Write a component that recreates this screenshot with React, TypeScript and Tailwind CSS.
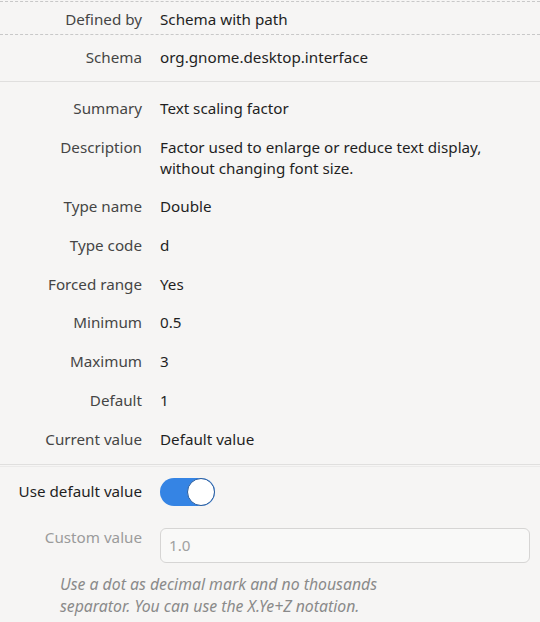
import React from "react";

const Row = ({ label, children, className = "" }: { label: string; children: React.ReactNode; className?: string }) => (
  <div className={`flex items-start ${className}`}>
    <div className="w-[142px] shrink-0 text-right text-[#454545]">{label}</div>
    <div className="ml-[18px] text-[#1f1f1f]">{children}</div>
  </div>
);

export default function App() {
  return (
    <div
      className="w-[540px] h-[622px] overflow-hidden bg-[#f6f5f4] text-[15.2px] leading-[21px]"
      style={{ fontFamily: '"Noto Sans", "Open Sans", sans-serif' }}
    >
      <div className="border-t border-dashed border-[#c8c8c8] mt-[1px]" />
      <Row label="Defined by" className="pt-[7px] pb-[4px]">Schema with path</Row>
      <div className="border-t border-dashed border-[#c8c8c8]" />
      <Row label="Schema" className="pt-[12px] pb-[13px]">org.gnome.desktop.interface</Row>
      <div className="border-t border-[#e0dfde]" />
      <div className="flex flex-col gap-[17.7px] pt-[16px] pb-[14px]">
        <Row label="Summary">Text scaling factor</Row>
        <Row label="Description">
          Factor used to enlarge or reduce text display,
          <br />
          without changing font size.
        </Row>
        <Row label="Type name">Double</Row>
        <Row label="Type code">d</Row>
        <Row label="Forced range">Yes</Row>
        <Row label="Minimum">0.5</Row>
        <Row label="Maximum">3</Row>
        <Row label="Default">1</Row>
        <Row label="Current value">Default value</Row>
      </div>
      <div className="border-t border-[#e0dfde]" />
      <div className="border-t border-[#ebeae9] mt-[1px]" />
      <div className="flex items-center mt-[11px]">
        <div className="w-[142px] shrink-0 text-right text-[#1f1f1f]">Use default value</div>
        <div className="ml-[18px] w-[55px] h-[28px] rounded-full bg-[#3584e4] relative">
          <div className="absolute right-[0px] top-[0px] w-[28px] h-[28px] rounded-full bg-white border border-[#2a5c9c]" />
        </div>
      </div>
      <div className="flex items-start mt-[22px]">
        <div className="w-[142px] shrink-0 text-right text-[#9b9b9b] -mt-[1px]">Custom value</div>
        <div className="ml-[18px] w-[370px] h-[35px] rounded-[6px] border border-[#d6d5d4] bg-[#f9f9f8] flex items-center px-[8px] text-[#a0a0a0]">
          1.0
        </div>
      </div>
      <div className="ml-[60px] mt-[10px] text-[15.8px] leading-[22px] italic text-[#8a8a8a]">
        Use a dot as decimal mark and no thousands
        <br />
        separator. You can use the X.Ye+Z notation.
      </div>
    </div>
  );
}
